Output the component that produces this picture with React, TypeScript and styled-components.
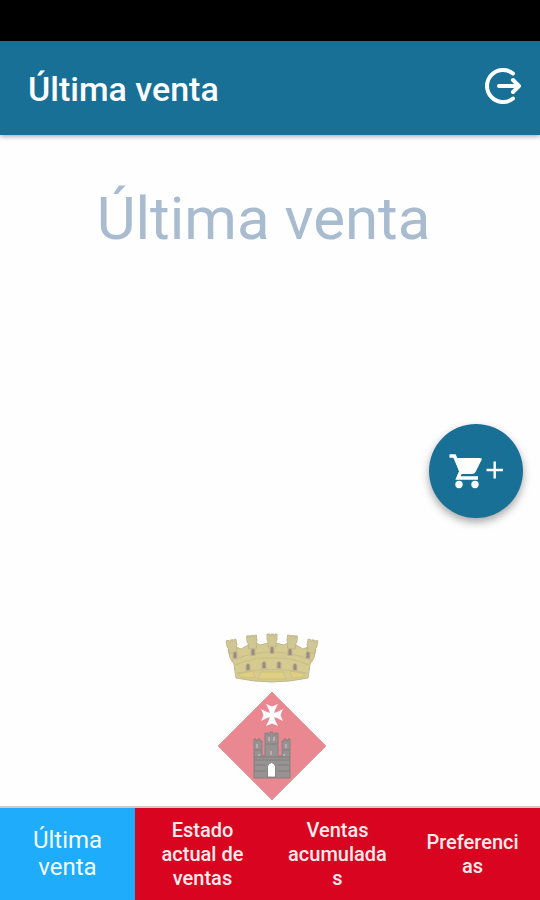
import React from "react";
import styled, { createGlobalStyle } from "styled-components";

const GlobalStyle = createGlobalStyle`
  * { box-sizing: border-box; }
  body { margin: 0; background: #fff; font-family: Roboto, "Liberation Sans", sans-serif; }
  button { font: inherit; border: 0; cursor: pointer; }
`;

const Screen = styled.div`
  min-height: 100vh;
  display: flex;
  flex-direction: column;
  background: #fefefe;
`;

const StatusBar = styled.div`
  height: 41px;
  background: #000;
`;

const Toolbar = styled.header`
  display: flex;
  align-items: center;
  justify-content: space-between;
  height: 94px;
  padding: 2px 17px 0 28px;
  background: #187096;
  box-shadow: 0 1px 5px rgba(0, 0, 0, 0.4);
`;

const ToolbarTitle = styled.h1`
  margin: 0;
  color: #fff;
  font-size: 34px;
  line-height: 40px;
  font-weight: 500;
`;

const IconButton = styled.button`
  display: flex;
  padding: 0 0 6px;
  background: transparent;
  color: #fff;
`;

const Content = styled.main`
  position: relative;
  flex: 1;
  display: flex;
  flex-direction: column;
  align-items: center;
  justify-content: space-between;
  padding: 48px 0 4px;
`;

const Heading = styled.h2`
  margin: 0 13px 0 0;
  color: #a9bbce;
  font-size: 60px;
  line-height: 72px;
  font-weight: 400;
`;

const CartButton = styled.button`
  position: absolute;
  right: 17px;
  top: 50%;
  width: 94px;
  height: 94px;
  margin-top: -47px;
  padding: 0;
  display: flex;
  align-items: center;
  justify-content: center;
  border-radius: 50%;
  background: #187096;
  color: #fff;
  box-shadow: 0 4px 8px rgba(0, 0, 0, 0.35);
`;

const EmblemArt = styled.svg`
  display: block;
  margin-left: 3px;
`;

const TabBar = styled.nav`
  display: grid;
  grid-template-columns: repeat(4, 1fr);
  height: 94px;
  border-top: 2px solid #d5c8c8;
  background: #d9041f;
`;

const Tab = styled.button<{ $active?: boolean }>`
  min-width: 0;
  padding: 0 17px;
  color: ${(p) => (p.$active ? "#f4fbff" : "#fdeaec")};
  background: ${(p) => (p.$active ? "#1eacfb" : "transparent")};
  font-size: ${(p) => (p.$active ? "24px" : "20px")};
  font-weight: ${(p) => (p.$active ? 400 : 500)};
  line-height: ${(p) => (p.$active ? "27px" : "24px")};
  overflow-wrap: anywhere;
  text-align: center;
`;

const LogoutIcon = () => (
  <svg width="38" height="38" viewBox="0 0 38 38" fill="none" stroke="currentColor" strokeWidth="4" strokeLinecap="round" strokeLinejoin="round" aria-hidden="true">
    <path d="M28 6.500A16 16 0 1 0 28 31.500" />
    <path d="M14 19H34M28 13L34 19L28 25" />
  </svg>
);

const CartIcon = () => (
  <svg width="56" height="38" viewBox="0 0 56 38" fill="none" stroke="currentColor" aria-hidden="true">
    <path d="M1.500 4H6.500L13 19L10 26H30" strokeWidth="3.500" />
    <path d="M6.500 6H32Q34.500 6 33.500 8L27.500 20Q26.500 22 24 22H12Z" fill="currentColor" stroke="none" />
    <circle cx="11" cy="32.500" r="3.700" fill="currentColor" stroke="none" />
    <circle cx="27" cy="32.500" r="3.700" fill="currentColor" stroke="none" />
    <path d="M38.500 18H55M46.700 9.500V26.500" strokeWidth="2.400" />
  </svg>
);

const turrets = [
  { x: 14, y: 8, tilt: -10 },
  { x: 34.5, y: 3.5, tilt: -5 },
  { x: 55, y: 2, tilt: 0 },
  { x: 75.5, y: 3.5, tilt: 5 },
  { x: 96, y: 8, tilt: 10 },
];
const crownWindows = [
  [18, 23], [36, 20], [55, 18], [73, 20], [91, 23],
  [31, 35], [47, 33], [62, 33], [78, 35],
];
const crossArm = "M-1.500 0L-3 -5L-6 -11L0 -8.500L6 -11L3 -5L1.500 0Z";

const Emblem = () => (
  <EmblemArt width="110" height="170" viewBox="0 0 110 170" role="img" aria-label="Escudo municipal">
    <path d="M11 17L19 15L24 17L31 13L39 11L43 13L51 11H59L67 13L71 11L79 13L86 17L91 15L99 17L97 26L93 32L91 46Q72 50 55 50Q38 50 19 46L17 32L13 26Z" fill="#d5ca90" stroke="#c0b88c" />
    {turrets.map((t) => (
      <g key={t.x} transform={`translate(${t.x} ${t.y}) rotate(${t.tilt})`}>
        <path d="M-5 0H-2V2H-1V0H2V2H3V0H5V6L4 8V13H-4V8L-5 6Z" fill="#d0c794" stroke="#b9b28a" strokeWidth=".8" />
      </g>
    ))}
    <path d="M14 29Q34 20 55 20Q76 20 96 29M18 33Q36 25 55 26Q74 25 92 33M20 41Q55 34 90 41" fill="none" stroke="#c3b988" strokeWidth=".8" />
    <path d="M22 42L36 39L38 46L24 45ZM44 40H66L69 47H41ZM73 39L88 42L86 45L75 46Z" fill="#dfcf82" stroke="#c4b77a" strokeWidth=".6" />
    {crownWindows.map(([x, y]) => (
      <g key={`${x}-${y}`}>
        <path d={`M${x - 2.5} ${y + 4}V${y - 2}Q${x} ${y - 6} ${x + 2.5} ${y - 2}V${y + 4}Z`} fill="#c1b48a" />
        <path d={`M${x - 1.4} ${y + 3}V${y - 2}Q${x} ${y - 4} ${x + 1.4} ${y - 2}V${y + 3}Z`} fill="#978a88" />
      </g>
    ))}
    <path d="M55 60L109 114L55 168L1 114Z" fill="#e98890" stroke="#d8a09f" />
    <g transform="translate(55 83)" fill="#fff">
      {[0, 90, 180, 270].map((angle) => (
        <path key={angle} d={crossArm} transform={`rotate(${angle})`} />
      ))}
    </g>
    <path d="M37 146V107H39V109H41V107H43V109H45V124H48V101H51V103H53V100H56V103H58V101H61V124H65V109H67V107H69V109H71V107H73V146Z" fill="#989393" stroke="#858080" />
    <path d="M38 118H44M49 112H60M66 118H72M37 125H73M37 128H73M37 133H49M60 133H73M37 139H49M60 139H73" stroke="#7c7878" strokeWidth=".8" />
    <path d="M40 112V116M52 105V109M57 105V109M69 112V116M42 122V124M54 119V123M67 122V124" stroke="#d9bcbe" strokeWidth="1.200" />
    <path d="M50.500 145V134Q54.500 127 58.500 134V145Z" fill="#fff" stroke="#777" strokeWidth=".8" />
  </EmblemArt>
);

const tabs = ["Última venta", "Estado actual de ventas", "Ventas acumuladas", "Preferencias"];

export default function App() {
  return (
    <Screen>
      <GlobalStyle />
      <StatusBar />
      <Toolbar>
        <ToolbarTitle>Última venta</ToolbarTitle>
        <IconButton type="button" aria-label="Salir"><LogoutIcon /></IconButton>
      </Toolbar>
      <Content>
        <Heading>Última venta</Heading>
        <Emblem />
        <CartButton type="button" aria-label="Añadir venta"><CartIcon /></CartButton>
      </Content>
      <TabBar>
        {tabs.map((label, index) => (
          <Tab key={label} type="button" $active={index === 0} aria-current={index === 0 ? "page" : undefined}>{label}</Tab>
        ))}
      </TabBar>
    </Screen>
  );
}
